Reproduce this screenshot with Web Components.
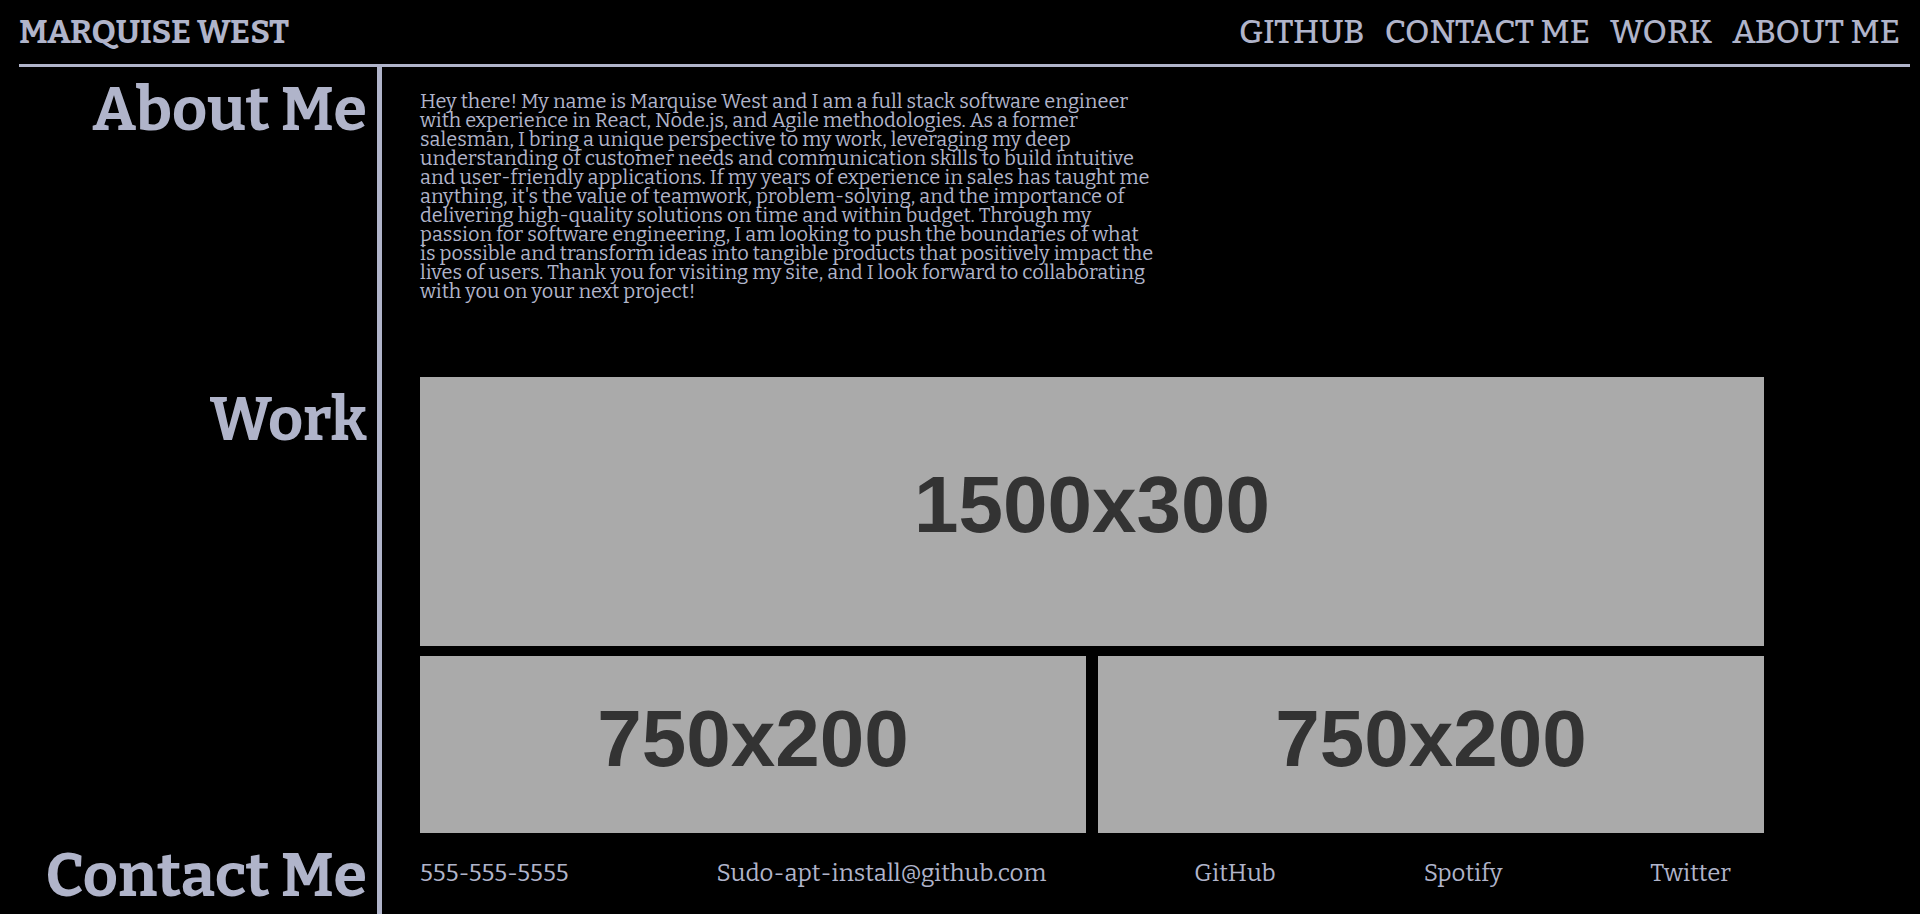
<!DOCTYPE html>
<html lang="en">
<head>
<meta charset="utf-8">
<meta name="viewport" content="width=device-width, initial-scale=1">
<title>Marquise West</title>
<style>
  html { background: #000; }
  body {
    margin: 0;
    color: #b0b4ca;
    font-family: "Roboto Slab", Bitter, "DejaVu Serif", serif;
  }
</style>
</head>
<body>
<portfolio-page>
  <site-header slot="header" name="Marquise West">
    <nav-link href="#github">GitHub</nav-link>
    <nav-link href="#contact">Contact Me</nav-link>
    <nav-link href="#work">Work</nav-link>
    <nav-link href="#about">About Me</nav-link>
  </site-header>

  <page-section id="about" heading="About Me">
    <about-text>
      Hey there! My name is Marquise West and I am a full stack software engineer<br>
      with experience in React, Node.js, and Agile methodologies. As a former<br>
      salesman, I bring a unique perspective to my work, leveraging my deep<br>
      understanding of customer needs and communication skills to build intuitive<br>
      and user-friendly applications. If my years of experience in sales has taught me<br>
      anything, it's the value of teamwork, problem-solving, and the importance of<br>
      delivering high-quality solutions on time and within budget. Through my<br>
      passion for software engineering, I am looking to push the boundaries of what<br>
      is possible and transform ideas into tangible products that positively impact the<br>
      lives of users. Thank you for visiting my site, and I look forward to collaborating<br>
      with you on your next project!
    </about-text>
  </page-section>

  <page-section id="work" heading="Work">
    <work-gallery>
      <work-tile wide>1500x300</work-tile>
      <work-tile>750x200</work-tile>
      <work-tile>750x200</work-tile>
    </work-gallery>
  </page-section>

  <page-section id="contact" heading="Contact Me">
    <contact-list>
      <contact-link href="tel:555-555-5555">555-555-5555</contact-link>
      <contact-link href="mailto:Sudo-apt-install@github.com">Sudo-apt-install@github.com</contact-link>
      <contact-link href="#github">GitHub</contact-link>
      <contact-link href="#spotify">Spotify</contact-link>
      <contact-link href="#twitter">Twitter</contact-link>
    </contact-list>
  </page-section>
</portfolio-page>

<script>
class ShadowElement extends HTMLElement {
  constructor() {
    super();
    this.attachShadow({ mode: "open" });
  }
  connectedCallback() {
    this.shadowRoot.innerHTML = this.template();
  }
  attr(name) {
    return this.getAttribute(name) || "";
  }
}

customElements.define("portfolio-page", class extends ShadowElement {
  template() {
    return `
      <style>
        :host { display: flex; flex-direction: column; min-height: 100vh; padding-left: 19px; box-sizing: border-box; }
        main { display: flex; flex-direction: column; flex: 1; }
        ::slotted(page-section:last-child) { flex: 1; }
      </style>
      <slot name="header"></slot>
      <main><slot></slot></main>`;
  }
});

customElements.define("site-header", class extends ShadowElement {
  template() {
    return `
      <style>
        :host { display: block; margin-right: 10px; border-bottom: 3px solid; text-transform: uppercase; }
        header { display: flex; justify-content: space-between; align-items: center; height: 64px; font-size: 33px; }
        h1 { margin: 0; font-size: inherit; font-weight: 700; }
        nav { display: flex; gap: 20px; padding-right: 10px; font-weight: 500; }
      </style>
      <header>
        <h1>${this.attr("name")}</h1>
        <nav><slot></slot></nav>
      </header>`;
  }
});

customElements.define("nav-link", class extends ShadowElement {
  template() {
    return `
      <style>
        :host { display: block; }
        a { color: inherit; text-decoration: none; }
      </style>
      <a href="${this.attr("href")}"><slot></slot></a>`;
  }
});

customElements.define("page-section", class extends ShadowElement {
  template() {
    return `
      <style>
        :host { display: grid; }
        section { display: grid; grid-template-columns: 363px 1fr; }
        h2 {
          margin: 0; padding: 5px 10px 0 0; box-sizing: border-box;
          border-right: 5px solid; text-align: right;
          font-size: 61px; line-height: 75px; font-weight: 700;
        }
        div { padding: 0 156px 0 38px; }
      </style>
      <section>
        <h2>${this.attr("heading")}</h2>
        <div><slot></slot></div>
      </section>`;
  }
});

customElements.define("about-text", class extends ShadowElement {
  template() {
    return `
      <style>
        :host { display: block; }
        p { margin: 0; padding: 25px 0 76px; font-size: 20px; line-height: 19px; }
      </style>
      <p><slot></slot></p>`;
  }
});

customElements.define("work-gallery", class extends ShadowElement {
  template() {
    return `
      <style>
        :host { display: grid; grid-template-columns: 1fr 1fr; gap: 10px 12px; }
      </style>
      <slot></slot>`;
  }
});

customElements.define("work-tile", class extends ShadowElement {
  template() {
    return `
      <style>
        :host {
          display: flex; align-items: center; justify-content: center;
          box-sizing: border-box; padding-bottom: 12px; aspect-ratio: 15 / 4;
          background: #aaa; color: #333;
          font: 700 80px "Liberation Sans", Arial, sans-serif;
        }
        :host([wide]) { grid-column: 1 / -1; aspect-ratio: 5 / 1; }
      </style>
      <slot></slot>`;
  }
});

customElements.define("contact-list", class extends ShadowElement {
  template() {
    return `
      <style>
        :host { display: block; }
        address {
          display: flex; justify-content: space-between; align-items: center;
          height: 80px; padding-right: 33px; font-size: 24px; font-style: normal;
        }
      </style>
      <address><slot></slot></address>`;
  }
});

customElements.define("contact-link", class extends ShadowElement {
  template() {
    return `
      <style>
        :host { display: block; }
        a { color: inherit; text-decoration: none; }
      </style>
      <a href="${this.attr("href")}"><slot></slot></a>`;
  }
});
</script>
</body>
</html>
